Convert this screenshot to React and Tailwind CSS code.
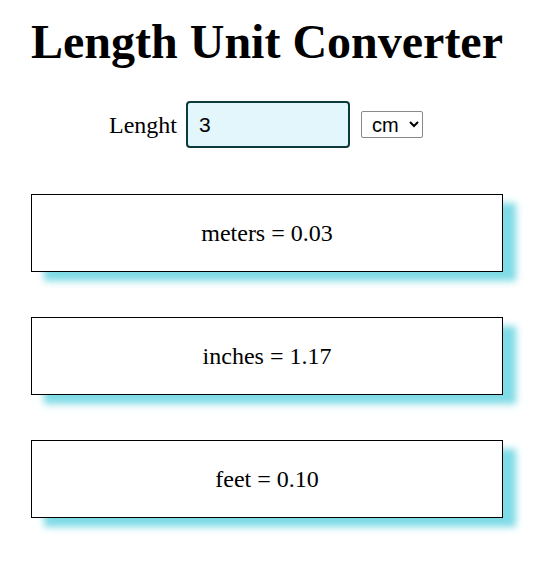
import { useState } from "react";

const factors = { cm: 0.01, m: 1, mm: 0.001, km: 1000 };

const App = () => {
  const [value, setValue] = useState("3");
  const [unit, setUnit] = useState("cm");

  const cm = (parseFloat(value) || 0) * factors[unit] * 100;
  const results = [
    { label: "meters", val: (cm / 100).toFixed(2) },
    { label: "inches", val: (cm * 0.39).toFixed(2) },
    { label: "feet", val: (cm * 0.0328).toFixed(2) },
  ];

  return (
    <div className="bg-white min-h-[581px] font-['Liberation_Serif',serif] text-black">
      <div className="w-[472px] ml-[31px] pt-[14px]">
        <h1 className="text-[48px] leading-[56px] font-bold text-center">
          Length Unit Converter
        </h1>

        {/* input row */}
        <div className="flex items-center justify-center mt-[31px] pr-[2px]">
          <label className="text-[24px] mr-[9px]">Lenght</label>
          <input
            type="text"
            value={value}
            onChange={(e) => setValue(e.target.value)}
            className="w-[164px] h-[47px] border-2 border-[#0b3b3b] rounded-[4px] bg-[#e3f6fb] px-[11px] text-[21px] font-['Liberation_Sans',sans-serif] outline-none"
          />
          <select
            value={unit}
            onChange={(e) => setUnit(e.target.value)}
            className="ml-[11px] h-[27px] w-[62px] border border-[#8a8a8a] rounded-[2px] pl-[6px] pr-[2px] text-[20px] leading-none font-['Liberation_Sans',sans-serif] bg-white"
          >
            <option value="cm">cm</option>
            <option value="m">m</option>
            <option value="mm">mm</option>
            <option value="km">km</option>
          </select>
        </div>

        {/* results */}
        <div className="flex flex-col gap-[45px] mt-[46px]">
          {results.map((r) => (
            <div
              key={r.label}
              className="h-[78px] border border-black bg-white flex items-center justify-center text-[24px] shadow-[13px_9px_7px_#7fdbe6]"
            >
              {r.label} = {r.val}
            </div>
          ))}
        </div>
      </div>
    </div>
  );
};

export default App;
